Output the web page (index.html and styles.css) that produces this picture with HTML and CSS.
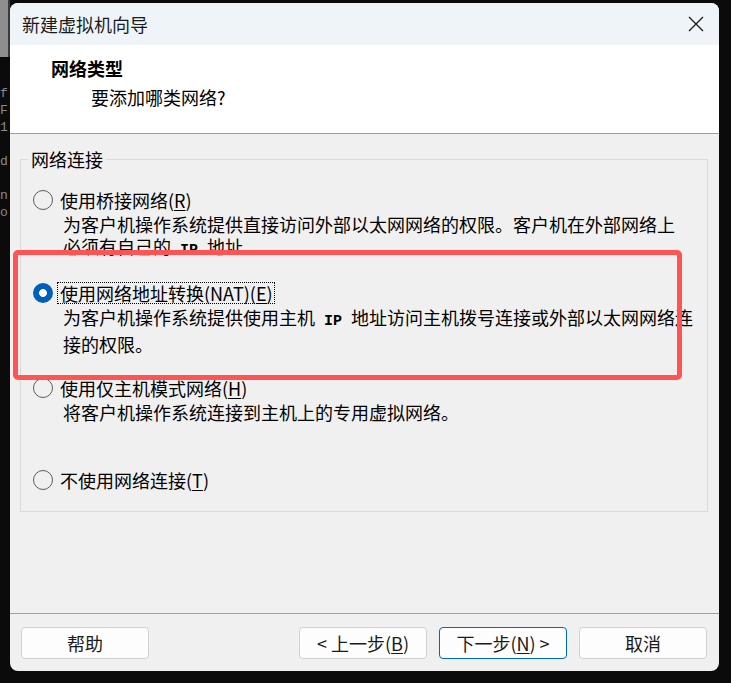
FILE: index.html
```html
<!DOCTYPE html>
<html lang="zh-CN">
<head>
<meta charset="utf-8">
<title>新建虚拟机向导</title>
<link rel="stylesheet" href="styles.css">
</head>
<body>
<div class="desk">
  <div class="side">
    <div class="side-top"></div>
    <div class="side-text">f<br>F<br>1<br><br>d<br><br>n<br>o</div>
  </div>
  <div class="window">
    <div class="titlebar">
      <span class="title">新建虚拟机向导</span>
      <svg class="close" width="16" height="16" viewBox="0 0 16 16"><path d="M1 1 L15 15 M15 1 L1 15" stroke="#1a1a1a" stroke-width="1.3" fill="none"/></svg>
    </div>
    <div class="header">
      <div class="h-title">网络类型</div>
      <div class="h-sub">要添加哪类网络?</div>
    </div>
    <div class="content">
      <fieldset class="group">
        <legend class="legend">网络连接</legend>
        <div class="options">
          <div class="option">
            <div class="radio-row"><span class="radio"></span><span class="label">使用桥接网络(<u>R</u>)</span></div>
            <div class="desc">为客户机操作系统提供直接访问外部以太网网络的权限。客户机在外部网络上<br>必须有自己的<span class="hw"> IP </span>地址。</div>
          </div>
          <div class="option">
            <div class="radio-row focus-row"><span class="radio checked"></span><span class="label focused">使用网络地址转换(NAT)(<u>E</u>)</span></div>
            <div class="desc">为客户机操作系统提供使用主机<span class="hw"> IP </span>地址访问主机拨号连接或外部以太网网络连<br>接的权限。</div>
          </div>
          <div class="option">
            <div class="radio-row"><span class="radio"></span><span class="label">使用仅主机模式网络(<u>H</u>)</span></div>
            <div class="desc">将客户机操作系统连接到主机上的专用虚拟网络。</div>
          </div>
          <div class="option">
            <div class="radio-row"><span class="radio"></span><span class="label">不使用网络连接(<u>T</u>)</span></div>
          </div>
        </div>
      </fieldset>
    </div>
    <div class="footer">
      <button class="btn">帮助</button>
      <div class="nav">
        <button class="btn">&lt; 上一步(<u>B</u>)</button>
        <button class="btn primary">下一步(<u>N</u>) &gt;</button>
        <button class="btn">取消</button>
      </div>
    </div>
    <div class="highlight"></div>
  </div>
</div>
</body>
</html>
```
FILE: styles.css
```css
* { box-sizing: border-box; }
html, body { margin: 0; padding: 0; }
body {
  width: 731px;
  height: 683px;
  overflow: hidden;
  background: #0b0b0b;
  font-family: "Noto Sans CJK SC", "Noto Sans", sans-serif;
  color: #000;
}
.desk {
  display: flex;
  height: 683px;
  background: #0b0b0b;
}
.side {
  width: 10px;
  flex: none;
  display: flex;
  flex-direction: column;
  overflow: hidden;
}
.side-top {
  height: 57px;
  background: #8e8e8e;
  border-right: 2px solid #3a3a3a;
}
.side-text {
  margin-top: 28px;
  font-family: "Liberation Mono", monospace;
  font-size: 13px;
  line-height: 17px;
  color: #8a8a8a;
  white-space: nowrap;
}
.window {
  position: relative;
  margin-top: 3px;
  width: 709px;
  height: 668px;
  flex: none;
  background: #f0f0f0;
  border-radius: 8px;
  overflow: hidden;
  display: flex;
  flex-direction: column;
}
.titlebar {
  height: 42px;
  flex: none;
  background: #eef4f8;
  display: flex;
  align-items: center;
  justify-content: space-between;
  padding: 0 15px 0 12px;
}
.title {
  font-size: 18px;
  line-height: 22px;
  color: #1b1b1b;
}
.close { display: block; }
.header {
  height: 89px;
  flex: none;
  background: #fff;
  border-bottom: 1px solid #a0a0a0;
  padding: 12px 0 0 41px;
}
.h-title {
  font-size: 18px;
  line-height: 22px;
  font-weight: bold;
}
.h-sub {
  margin: 7px 0 0 40px;
  font-size: 18px;
  line-height: 22px;
}
.content {
  height: 479px;
  flex: none;
  padding: 14px 11px 0 10px;
}
.group {
  margin: 0;
  padding: 0 0 18px 12px;
  border: 1px solid #dadada;
  min-inline-size: 0;
}
.legend {
  margin-left: -5px;
  padding: 0 3px;
  font-size: 18px;
  line-height: 22px;
}
.options {
  margin-top: 17px;
  display: grid;
  grid-template-rows: 93px 95px 92px auto;
}
.radio-row {
  height: 26px;
  display: flex;
  align-items: center;
  gap: 7px;
}
.focus-row { gap: 4px; }
.radio {
  width: 20px;
  height: 20px;
  flex: none;
  border-radius: 50%;
  border: 1.3px solid #5d5d5d;
  background: transparent;
}
.radio.checked {
  border: 0;
  background: radial-gradient(circle, #fff 0 3.6px, #005fb8 4.3px);
}
.label {
  font-size: 18px;
  line-height: 22px;
  white-space: nowrap;
}
.label u, .btn u { text-underline-offset: 2px; }
.focused {
  display: inline-block;
  padding: 0 2px 0 3px;
  outline: 1px dotted #000;
  outline-offset: -1px;
}
.desc {
  margin-left: 30px;
  font-size: 18px;
  line-height: 22px;
  white-space: nowrap;
}
.hw {
  font-family: "Liberation Mono", monospace;
  font-size: 15px;
  font-weight: bold;
  white-space: pre;
}
.footer {
  flex: 1;
  border-top: 1px solid #a0a0a0;
  display: flex;
  justify-content: space-between;
  padding: 13px 12px 0 11px;
}
.nav {
  display: flex;
  gap: 12px;
}
.btn {
  width: 128px;
  height: 32px;
  background: #fdfdfd;
  border: 1px solid #d0d0d0;
  border-radius: 4px;
  font-family: "Noto Sans CJK SC", "Noto Sans", sans-serif;
  font-size: 18px;
  line-height: 22px;
  color: #1a1a1a;
  padding: 0;
}
.btn.primary {
  border-color: #0067c0;
}
.highlight {
  position: absolute;
  left: 3px;
  top: 247px;
  width: 669px;
  height: 130px;
  border: 5px solid #ff5454;
  border-radius: 5px;
  pointer-events: none;
}
```
